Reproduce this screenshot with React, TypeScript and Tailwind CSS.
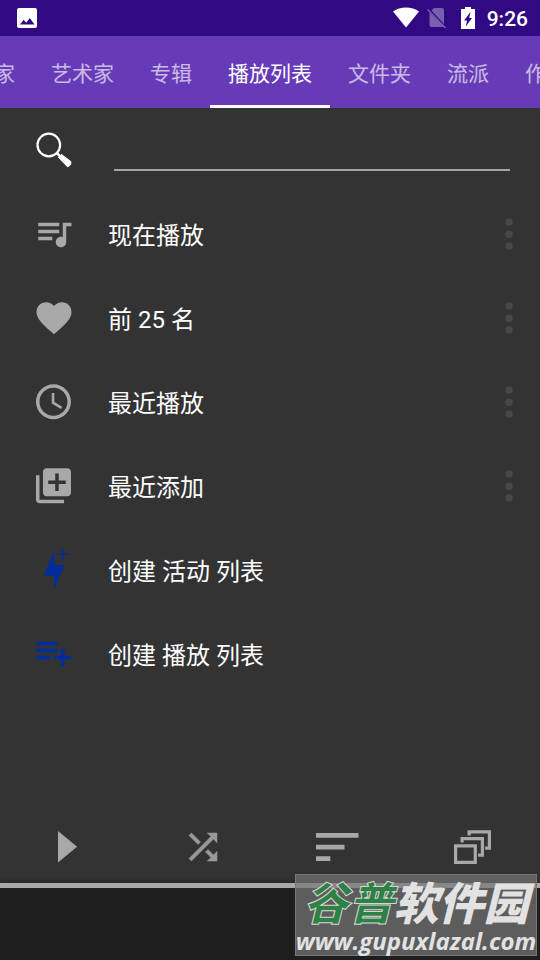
import { useState } from 'react';
import type { ReactNode } from 'react';

const TABS = ['家', '艺术家', '专辑', '播放列表', '文件夹', '流派', '作'];

function Icon({ children, className = '' }: { children: ReactNode; className?: string }) {
    return (
        <svg viewBox="0 0 24 24" className={`size-[42px] shrink-0 fill-current ${className}`} aria-hidden="true">
            {children}
        </svg>
    );
}

const ROWS = [
    {
        label: '现在播放',
        icon: <path d="M15 5.500H3v2h12v-2zm0 4H3v2h12v-2zM3 15.500h8v-2H3v2zM17 5.500v8.180c-.31-.11-.65-.18-1-.18-1.660 0-3 1.340-3 3s1.340 3 3 3 3-1.340 3-3V7.500h3v-2h-5z" />,
        menu: true,
    },
    {
        label: '前 25 名',
        icon: <path d="M12 21.350l-1.450-1.320C5.400 15.360 2 12.280 2 8.500 2 5.420 4.420 3 7.500 3c1.740 0 3.410.81 4.500 2.090C13.090 3.810 14.760 3 16.500 3 19.580 3 22 5.420 22 8.500c0 3.780-3.400 6.860-8.550 11.540L12 21.350z" />,
        menu: true,
    },
    {
        label: '最近播放',
        icon: <path d="M11.700 1.800C6.180 1.800 1.700 6.280 1.700 11.800s4.470 10 9.990 10C17.220 21.800 21.700 17.320 21.700 11.800S17.220 1.800 11.700 1.800zm0 18c-4.420 0-8-3.580-8-8s3.580-8 8-8 8 3.580 8 8-3.580 8-8 8zm.5-13h-1.500v6l5.250 3.150.75-1.230-4.500-2.670z" />,
        menu: true,
    },
    {
        label: '最近添加',
        icon: <path d="M3.700 5.800h-2v14c0 1.100.9 2 2 2h14v-2h-14v-14zm16-4h-12c-1.100 0-2 .9-2 2v12c0 1.100.9 2 2 2h12c1.100 0 2-.9 2-2v-12c0-1.100-.9-2-2-2zm-1 9h-4v4h-2v-4h-4v-2h4v-4h2v4h4v2z" />,
        menu: true,
    },
    {
        label: '创建 活动 列表',
        icon: <path d="M12.200 1.200L6.100 15.200h5.800V23.100l6.100-14h-5.800zM16.500-.7h.8v3.200h3.200v.8h-3.200v3.300h-.8V3.300h-3.200v-.8h3.200z" />,
        menu: false,
    },
    {
        label: '创建 播放 列表',
        icon: <path d="M14 9H2v2h12V9zm0-4H2v2h12V5zm4 8V9h-2v4h-4v2h4v4h2v-4h4v-2h-4zM2 15h8v-2H2v2z" />,
        menu: false,
    },
];

function StatusBar() {
    return (
        <header className="flex h-9 items-center justify-between bg-[#310a83] pr-3 pl-4 text-white">
            <svg viewBox="0 0 22 22" className="size-[22px]" aria-hidden="true">
                <path fill="currentColor" fillRule="evenodd" d="M3 1h16q2 0 2 2v16q0 2-2 2H3q-2 0-2-2V3q0-2 2-2zM4 17.500h14.500l-4.700-6.500-3.600 4.700-2.500-3z" />
            </svg>
            <div className="flex items-center">
                <svg viewBox="0 0 26 22" className="h-[22px] w-[26px]" aria-hidden="true">
                    <path fill="currentColor" d="M0 4.500C7-.8 19-.8 26 4.500L13 20.500z" />
                </svg>
                <svg viewBox="0 0 20 22" className="ml-2 h-[22px] w-5 opacity-35" aria-hidden="true">
                    <path fill="currentColor" d="M7 1h8q2 0 2 2v14L4.500 3.500zM2.500 5.500L17 20H4.500q-2 0-2-2z" />
                    <path stroke="currentColor" strokeWidth="1.500" d="M.5 2.500l18 18.500" />
                </svg>
                <svg viewBox="0 0 14 22" className="ml-3.5 h-[22px] w-3.5" aria-hidden="true">
                    <path fill="currentColor" fillRule="evenodd" d="M4 0h6v2h4v20H0V2h4zM9.500 5L3 13.500h3L4.800 19.500l6.200-8.500H8.200z" />
                </svg>
                <time className="ml-3 pt-0.5 text-[21px] leading-8 font-medium">9:26</time>
            </div>
        </header>
    );
}

function Watermark() {
    return (
        <div className="absolute right-[3px] bottom-1 flex w-[242px] flex-col items-center border border-[#777] bg-[#777]/70 whitespace-nowrap text-[#e2e2e2]">
            <div className="font-['Noto_Sans_CJK_SC',sans-serif] text-[45px] leading-[52px] font-black italic">
                <span className="text-[#2d8144] [-webkit-text-stroke:1px_#d5d5d5]">谷普</span>软件园
            </div>
            <div className="font-['Open_Sans',sans-serif] text-2xl leading-7 font-bold italic">www.gupuxlazal.com</div>
        </div>
    );
}

export default function App() {
    const [active, setActive] = useState('播放列表');
    const [query, setQuery] = useState('');

    return (
        <div className="relative flex min-h-screen flex-col overflow-hidden bg-[#333] font-[Roboto,'Noto_Sans_CJK_SC',sans-serif] text-white">
            <StatusBar />

            <nav className="flex h-[72px] overflow-hidden bg-[#673ab7]">
                <div className="-ml-6 flex">
                    {TABS.map((tab) => (
                        <button
                            key={tab}
                            onClick={() => setActive(tab)}
                            className={`shrink-0 border-b-[3px] px-[18px] pt-2 text-[21px] whitespace-nowrap ${active === tab ? 'border-white text-white' : 'border-transparent text-white/65'}`}
                        >
                            {tab}
                        </button>
                    ))}
                </div>
            </nav>

            <main className="flex-1">
                <label className="flex h-[84px] items-center pr-[30px] pl-[33px]">
                    <svg viewBox="0 0 42 42" className="size-[42px] shrink-0" fill="none" stroke="currentColor" aria-label="搜索">
                        <circle cx="15.800" cy="16" r="11.300" strokeWidth="2.200" />
                        <path d="M23.800 24l4 4" strokeWidth="2.500" />
                        <path d="M25.500 28.500L28.500 25.500 37.800 32.500Q38.500 36.500 34.500 37.800z" fill="currentColor" strokeWidth="1" strokeLinejoin="round" />
                    </svg>
                    <input
                        type="text"
                        value={query}
                        onChange={(e) => setQuery(e.target.value)}
                        className="ml-[39px] h-[42px] min-w-0 flex-1 border-b-2 border-[#a5a3a5] bg-transparent text-2xl outline-none"
                    />
                </label>

                <ul>
                    {ROWS.map((row) => (
                        <li key={row.label} className="flex h-[84px] items-center pr-2.5 pl-[33px]">
                            <button className="flex h-full flex-1 items-center gap-[33px] text-left text-2xl">
                                <Icon className={`overflow-visible ${row.menu ? 'text-[#a8a8a8]' : 'text-[#002d9c]'}`}>{row.icon}</Icon>
                                <span className="pt-[3px]">{row.label}</span>
                            </button>
                            {row.menu && (
                                <button aria-label="更多" className="flex h-full w-[42px] items-center justify-center text-[#484848]">
                                    <svg viewBox="0 0 8 32" className="h-8 w-2 fill-current" aria-hidden="true">
                                        <circle cx="4" cy="4" r="3.800" />
                                        <circle cx="4" cy="16.300" r="3.800" />
                                        <circle cx="4" cy="28" r="3.800" />
                                    </svg>
                                </button>
                            )}
                        </li>
                    ))}
                </ul>
            </main>

            {/* Bottom controls */}
            <div className="grid h-[72px] grid-cols-4 text-[#a8a8a8]">
                <button aria-label="播放" className="flex items-center justify-center">
                    <Icon><path d="M6.300 2.900v18L17.200 11.900z" /></Icon>
                </button>
                <button aria-label="随机播放" className="flex items-center justify-center text-[#999]">
                    <Icon><path d="M10.590 9.170L5.410 4 4 5.410l5.170 5.170 1.420-1.410zM14.500 4l2.040 2.040L4 18.590 5.410 20 17.960 7.460 20 9.500V4h-5.500zm.33 9.410l-1.410 1.410 3.130 3.130L14.500 20H20v-5.500l-2.040 2.040-3.130-3.130z" stroke="currentColor" strokeWidth=".3" /></Icon>
                </button>
                <button aria-label="排序" className="flex items-center justify-center">
                    <svg viewBox="1 0 42 42" className="size-[42px] overflow-visible fill-current" aria-hidden="true">
                        <path d="M0 7h42.500v4.800H0zM0 18.700h28.500v4.800H0zM0 30.300h14.300v4.800H0z" />
                    </svg>
                </button>
                <button aria-label="窗口" className="flex items-center justify-center">
                    <svg viewBox="1 0 42 42" className="size-[42px]" fill="none" stroke="currentColor" strokeWidth="3.200" aria-hidden="true">
                        <path d="M4.600 19.800h19.700v16.500H4.600zM11.100 16.500v-3.800h20.300v16.400h-4.300M18.100 9.500V5.800h20.300v16.300h-4.300" />
                    </svg>
                </button>
            </div>
            <footer className="h-[77px] border-t-[5px] border-[#a8a8a8] bg-[#1e1e1e] shadow-[0_-2px_6px_#262626]" />

            <Watermark />
        </div>
    );
}
